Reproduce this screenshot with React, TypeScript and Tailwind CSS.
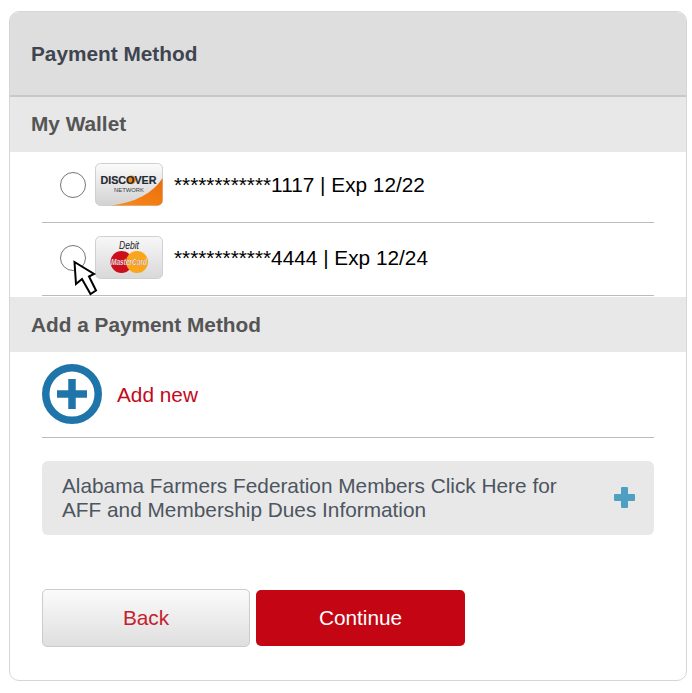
import React from 'react';

const DiscoverLogo = () => (
  <svg width="68" height="43" viewBox="0 0 68 43" className="shrink-0">
    <defs>
      <linearGradient id="discBg" x1="0" y1="0" x2="0" y2="1">
        <stop offset="0" stopColor="#fbfbfb" />
        <stop offset="1" stopColor="#d2d2d2" />
      </linearGradient>
      <linearGradient id="discOrange" x1="0" y1="1" x2="1" y2="0">
        <stop offset="0" stopColor="#fb8c1e" />
        <stop offset="1" stopColor="#e96c07" />
      </linearGradient>
    </defs>
    <rect x="0.5" y="0.5" width="67" height="42" rx="5" fill="url(#discBg)" stroke="#cfcfcf" />
    <path d="M15 42.5 C40 40 58 30 67.5 15 V37.5 a5 5 0 0 1 -5 5 Z" fill="url(#discOrange)" />
    <circle cx="36.5" cy="16.8" r="4.4" fill="#f08a1d" />
    <text x="33.5" y="21" textAnchor="middle" fontFamily="'Liberation Sans', sans-serif" fontWeight="700" fontSize="11.5" textLength="56" lengthAdjust="spacingAndGlyphs" fill="#1f2a35" stroke="#1f2a35" strokeWidth="0.2">DISCOVER</text>
    <text x="34" y="29" textAnchor="middle" fontFamily="'Liberation Sans', sans-serif" fontSize="6" textLength="30" lengthAdjust="spacingAndGlyphs" fill="#3a3f44">NETWORK</text>
  </svg>
);

const MastercardLogo = () => (
  <svg width="68" height="43" viewBox="0 0 68 43" className="shrink-0">
    <defs>
      <linearGradient id="mcBg" x1="0" y1="0" x2="0" y2="1">
        <stop offset="0" stopColor="#f8f8f8" />
        <stop offset="1" stopColor="#d8d8d8" />
      </linearGradient>
    </defs>
    <rect x="0.5" y="0.5" width="67" height="42" rx="5" fill="url(#mcBg)" stroke="#cfcfcf" />
    <text x="34" y="13" textAnchor="middle" fontFamily="'Liberation Sans', sans-serif" fontStyle="italic" fontSize="10" textLength="20" lengthAdjust="spacingAndGlyphs" fill="#222">Debit</text>
    <circle cx="26.5" cy="26" r="11" fill="#cc0f1c" />
    <circle cx="42" cy="26" r="11" fill="#fba51a" />
    <text x="34" y="29" textAnchor="middle" fontFamily="'Liberation Sans', sans-serif" fontStyle="italic" fontWeight="700" fontSize="8.5" textLength="36" lengthAdjust="spacingAndGlyphs" fill="#fff" stroke="#8a3b3b" strokeWidth="0.2">MasterCard</text>
  </svg>
);

const Radio = () => (
  <span className="block w-[26px] h-[26px] shrink-0 rounded-full bg-white border-[1.5px] border-[#767676]" />
);

const SavedCard = ({ logo, number, rowClass }: { logo: React.ReactNode; number: string; rowClass: string }) => (
  <div className={`${rowClass} border-b border-[#bbbbbb] mx-[32px] flex items-center pl-[18px]`}>
    <Radio />
    <div className="ml-[9px]">{logo}</div>
    <span className="ml-[11px] text-[20.8px] text-black">{number}</span>
  </div>
);

const App = () => {
  return (
    <div className="w-[692px] h-[693px] bg-white pt-[11px] pl-[9px] font-['Liberation_Sans',Arial,sans-serif]">
      <div className="relative w-[678px] h-[670px] rounded-[10px] border border-[#d6d6d6] overflow-hidden bg-white">
        <div className="h-[85px] bg-[#dedede] border-b-2 border-[#c8c8c8] flex items-center pl-[21px]">
          <h1 className="text-[20.8px] font-bold text-[#3f4550]">Payment Method</h1>
        </div>

        <div className="h-[55px] bg-[#e8e8e8] flex items-center pl-[21px] pb-[1px]">
          <h2 className="text-[20.8px] font-bold text-[#555555]">My Wallet</h2>
        </div>
        <SavedCard rowClass="h-[71px] pb-[5px]" logo={<DiscoverLogo />} number="************1117 | Exp 12/22" />
        <SavedCard rowClass="h-[73px] pb-[3px]" logo={<MastercardLogo />} number="************4444 | Exp 12/24" />

        <div className="h-[55px] mt-[1px] bg-[#e8e8e8] flex items-center pl-[21px]">
          <h2 className="text-[20.8px] font-bold text-[#555555]">Add a Payment Method</h2>
        </div>

        <div className="h-[86px] mx-[32px] border-b border-[#bbbbbb] flex items-center pb-[1px]">
          <svg width="60" height="60" viewBox="0 0 60 60" className="shrink-0">
            <circle cx="30" cy="30" r="26.25" fill="none" stroke="#1f75a9" strokeWidth="7.5" />
            <path d="M26.25 15h7.5v11.25H45v7.5H33.75V45h-7.5V33.75H15v-7.5h11.25z" fill="#1f75a9" />
          </svg>
          <span className="ml-[15px] pt-[2px] text-[20.8px] text-[#c20a1c]">Add new</span>
        </div>

        <div className="mt-[23px] mx-[32px] h-[74px] rounded-[6px] bg-[#e8e8e8] flex items-center justify-between pl-[20px] pr-[19px]">
          <p className="text-[20.8px] leading-[24px] mb-[1px] text-[#4c5560]">
            Alabama Farmers Federation Members Click Here for
            <br />
            AFF and Membership Dues Information
          </p>
          <svg width="21" height="21" viewBox="0 0 21 21" className="shrink-0 mb-[2px]">
            <path d="M7 1a1 1 0 0 1 1-1h5a1 1 0 0 1 1 1v6h6a1 1 0 0 1 1 1v5a1 1 0 0 1-1 1h-6v6a1 1 0 0 1-1 1H8a1 1 0 0 1-1-1v-6H1a1 1 0 0 1-1-1V8a1 1 0 0 1 1-1h6z" fill="#4f9fc3" />
          </svg>
        </div>

        <div className="mt-[54px] ml-[32px] flex items-center gap-[6px]">
          <button className="w-[208px] h-[58px] rounded-[5px] border border-[#cccccc] bg-gradient-to-b from-[#fbfbfb] to-[#dfdfdf] text-[20.8px] text-[#c5202e]">
            Back
          </button>
          <button className="w-[209px] h-[56px] rounded-[5px] bg-[#c40614] text-[20.8px] text-white">
            Continue
          </button>
        </div>

        <svg width="26" height="36" viewBox="0 0 26 36" className="absolute left-[62px] top-[248px]">
          <path d="M2.5 2 L4 24 L10 19 L18.5 34 L24 30.5 L17 16.5 L22 14 Z" fill="#fff" stroke="#000" strokeWidth="2" strokeLinejoin="miter" />
        </svg>
      </div>
    </div>
  );
};

export default App;
